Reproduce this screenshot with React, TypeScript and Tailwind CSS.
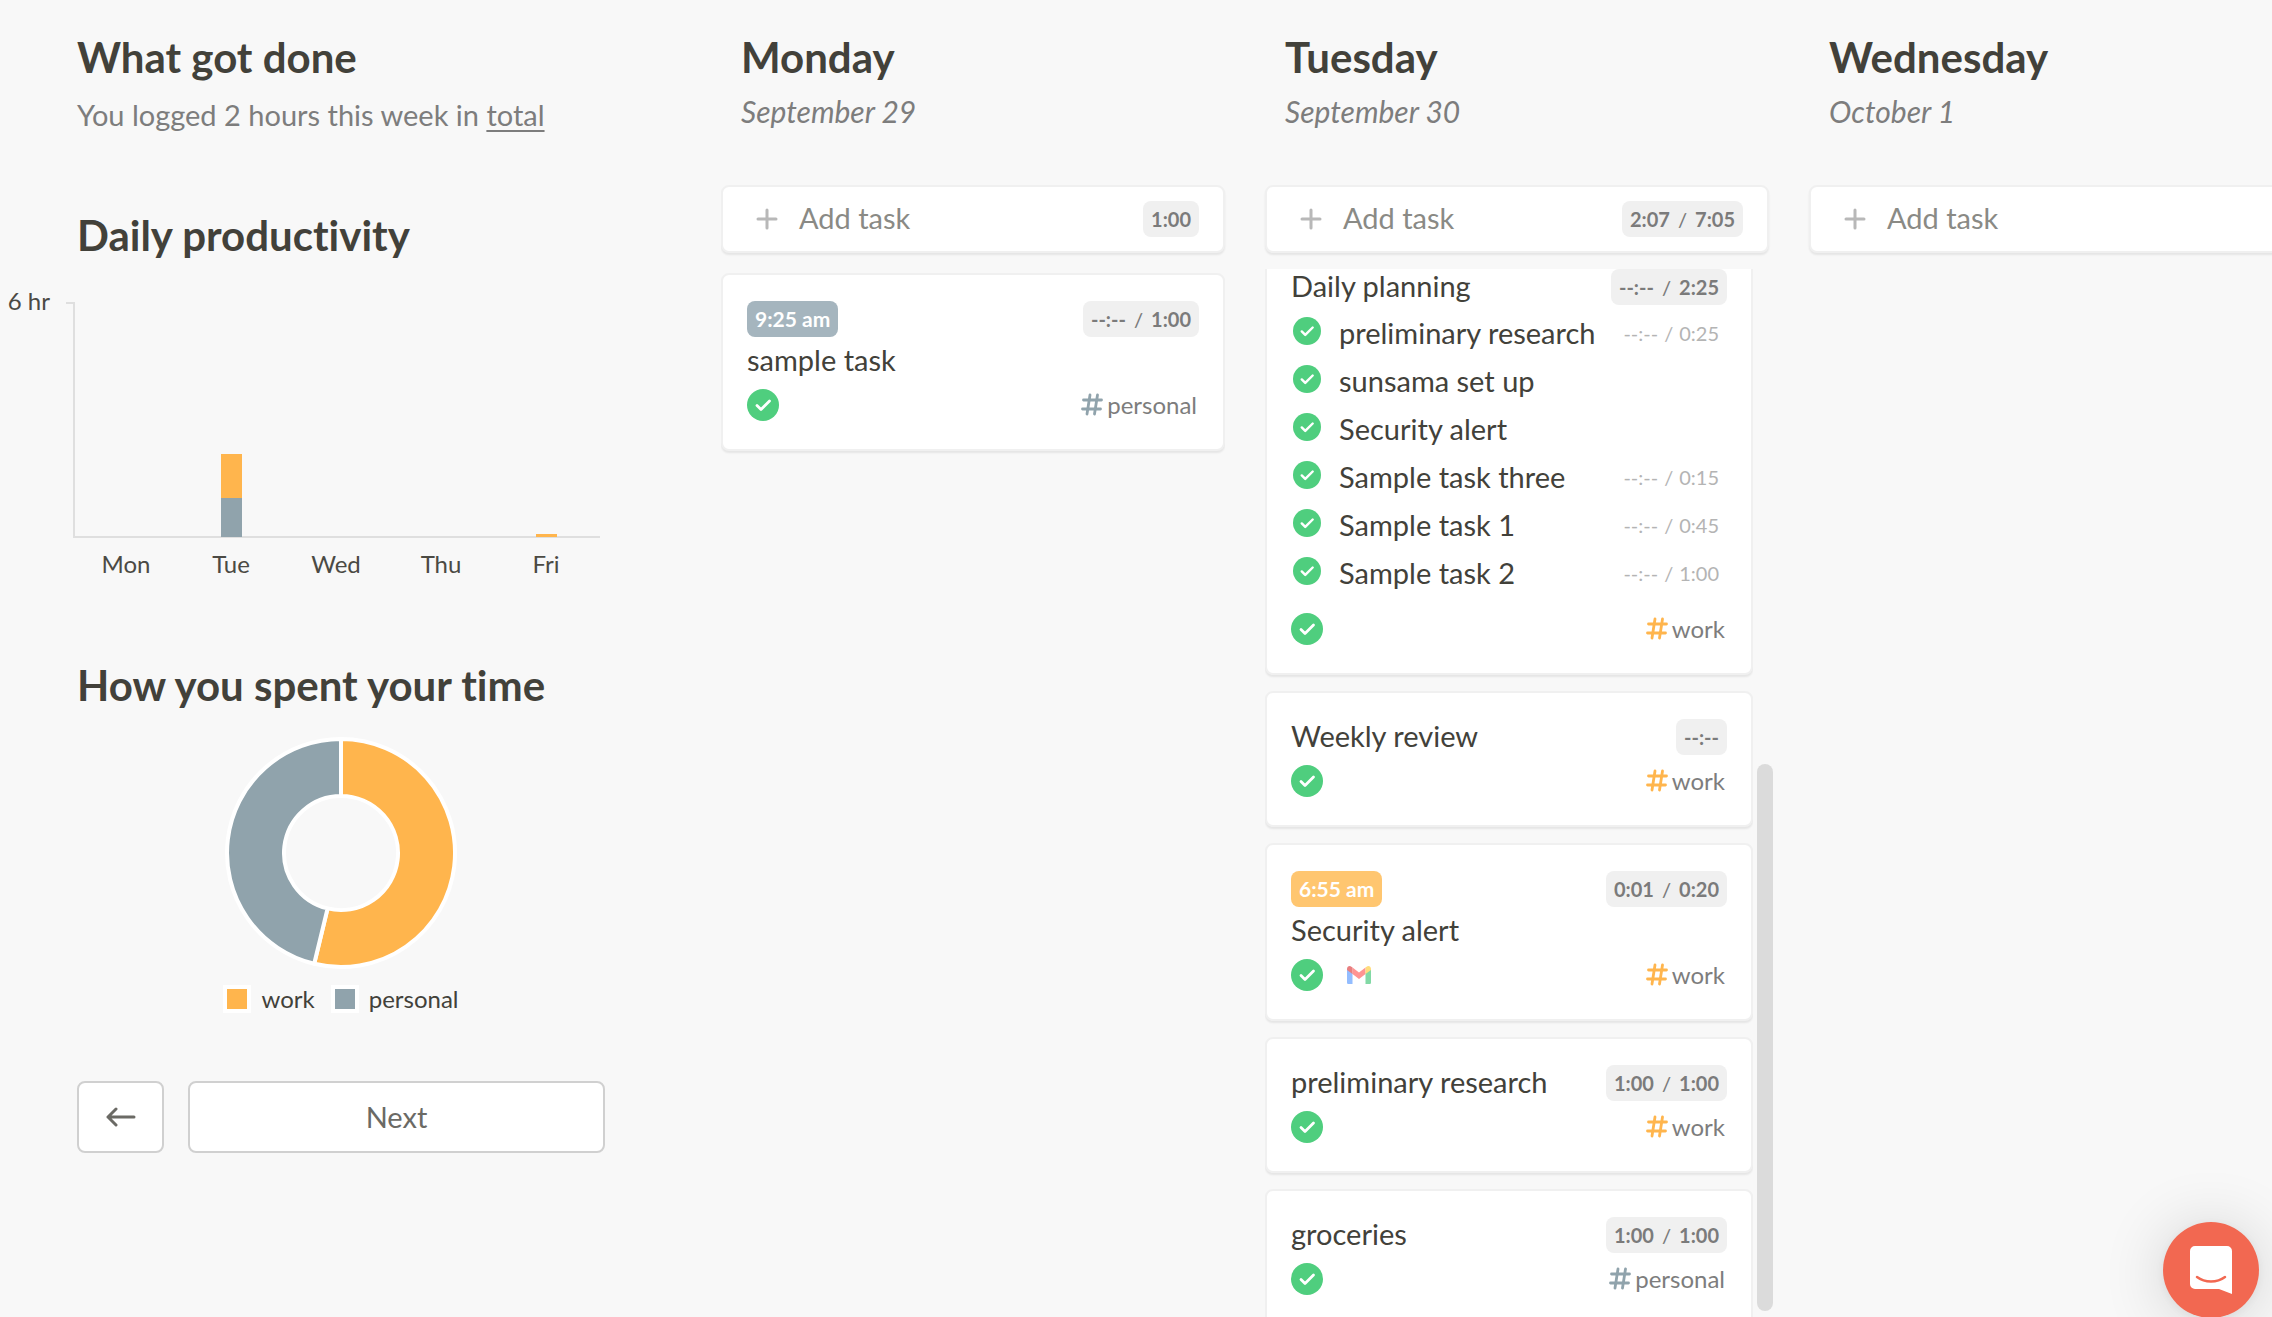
import { useLayoutEffect, useRef } from "react";
import clsx from "clsx";

type Channel = "work" | "personal";

type Subtask = { title: string; planned?: string };

type Task = {
  id: string;
  title: string;
  channel: Channel;
  actual: string;
  planned?: string;
  startsAt?: string;
  subtasks?: Subtask[];
  fromGmail?: boolean;
};

type Day = {
  name: string;
  date: string;
  actual?: string;
  planned?: string;
  scrollTop?: number;
  tasks: Task[];
};

const NO_TIME = "--:--";

const DAYS: Day[] = [
  {
    name: "Monday",
    date: "September 29",
    actual: "1:00",
    tasks: [
      {
        id: "m1",
        title: "sample task",
        channel: "personal",
        actual: NO_TIME,
        planned: "1:00",
        startsAt: "9:25 am",
      },
    ],
  },
  {
    name: "Tuesday",
    date: "September 30",
    actual: "2:07",
    planned: "7:05",
    scrollTop: 32,
    tasks: [
      {
        id: "t1",
        title: "Daily planning",
        channel: "work",
        actual: NO_TIME,
        planned: "2:25",
        subtasks: [
          { title: "preliminary research", planned: "0:25" },
          { title: "sunsama set up" },
          { title: "Security alert" },
          { title: "Sample task three", planned: "0:15" },
          { title: "Sample task 1", planned: "0:45" },
          { title: "Sample task 2", planned: "1:00" },
        ],
      },
      { id: "t2", title: "Weekly review", channel: "work", actual: NO_TIME },
      {
        id: "t3",
        title: "Security alert",
        channel: "work",
        actual: "0:01",
        planned: "0:20",
        startsAt: "6:55 am",
        fromGmail: true,
      },
      {
        id: "t4",
        title: "preliminary research",
        channel: "work",
        actual: "1:00",
        planned: "1:00",
      },
      {
        id: "t5",
        title: "groceries",
        channel: "personal",
        actual: "1:00",
        planned: "1:00",
      },
    ],
  },
  { name: "Wednesday", date: "October 1", tasks: [] },
];

export default function App() {
  return (
    <div className="flex h-screen overflow-hidden bg-[#f8f8f8] font-['Lato','Open_Sans',sans-serif] text-[#42413a] [font-variant-ligatures:none]">
      <Summary />
      <main className="flex min-w-0 flex-1 gap-10 overflow-hidden">
        {DAYS.map((day) => (
          <DayColumn key={day.name} day={day} />
        ))}
      </main>
      <button
        type="button"
        aria-label="Open chat"
        className="fixed right-[13px] -bottom-px flex size-24 items-center justify-center rounded-full bg-[#f26851] shadow-[0_2px_12px_rgba(0,0,0,0.06),0_4px_64px_rgba(0,0,0,0.16)]"
      >
        <svg width="42" height="48" viewBox="0 0 42 48" fill="none">
          <path
            d="M5 0h32a5 5 0 0 1 5 5v43l-13-5H5a5 5 0 0 1-5-5V5a5 5 0 0 1 5-5z"
            fill="#fff"
          />
          <path
            d="M7 31c8 6 20 6 28 0"
            stroke="#f26851"
            strokeWidth="2.5"
            strokeLinecap="round"
          />
        </svg>
      </button>
    </div>
  );
}

function Summary() {
  return (
    <aside className="w-[721px] shrink-0 pt-[33px]">
      <div className="pl-[77px]">
        <h1 className="text-[42px] leading-12 font-bold">What got done</h1>
        <p className="mt-4 text-[29px] leading-9 text-[#7d7d7d]">
          You logged 2 hours this week in{" "}
          <a href="#total" className="underline underline-offset-4">
            total
          </a>
        </p>
        <h2 className="mt-[78px] text-[42px] leading-12 font-bold">
          Daily productivity
        </h2>
      </div>

      <ProductivityChart />

      <div className="w-[605px] pl-[77px]">
        <h2 className="mt-[68px] text-[42px] leading-12 font-bold">
          How you spent your time
        </h2>
        <TimeDonut />
        <ul className="mt-3 flex justify-center gap-4 text-2xl leading-7">
          <li className="flex gap-2.5">
            <span className="size-7 border-4 border-white bg-[#ffb54d]" />
            work
          </li>
          <li className="flex gap-2.5">
            <span className="size-7 border-4 border-white bg-[#90a3ac]" />
            personal
          </li>
        </ul>
        <div className="mt-[68px] flex gap-6 text-[29px] text-[#6b6a65]">
          <button
            type="button"
            aria-label="Back"
            className="flex h-[72px] w-[87px] items-center justify-center rounded-lg border-2 border-[#d0d0d0] bg-white"
          >
            <svg
              width="30"
              height="20"
              viewBox="0 0 30 20"
              fill="none"
              stroke="currentColor"
              strokeWidth="3"
              strokeLinecap="round"
              strokeLinejoin="round"
            >
              <path d="M10 2 2 10l8 8M2 10h26" />
            </svg>
          </button>
          <button
            type="button"
            className="h-[72px] flex-1 rounded-lg border-2 border-[#d0d0d0] bg-white"
          >
            Next
          </button>
        </div>
      </div>
    </aside>
  );
}

function ProductivityChart() {
  const labels = ["Mon", "Tue", "Wed", "Thu", "Fri"];
  return (
    <svg
      width="605"
      height="320"
      viewBox="0 0 605 320"
      role="img"
      aria-label="Daily productivity"
      className="mt-3.5 block"
    >
      <path
        d="M66 30h8v234h526"
        fill="none"
        stroke="#dfdfdf"
        strokeWidth="2"
      />
      <rect x="221" y="181" width="21" height="44" fill="#ffb54d" />
      <rect x="221" y="225" width="21" height="39" fill="#90a3ac" />
      <rect x="536" y="261" width="21" height="3" fill="#ffb54d" />
      <g fill="#4b4a44" fontSize="24">
        <text x="50" y="37" textAnchor="end">
          6 hr
        </text>
        {labels.map((label, i) => (
          <text key={label} x={126 + i * 105} y="300" textAnchor="middle">
            {label}
          </text>
        ))}
      </g>
    </svg>
  );
}

function TimeDonut() {
  return (
    <svg
      width="240"
      height="240"
      viewBox="-120 -120 240 240"
      role="img"
      aria-label="work and personal"
      className="mx-auto mt-6 block"
    >
      <g stroke="#fff" strokeWidth="4" strokeLinejoin="bevel">
        <path
          d="M0-114A114 114 0 1 1-26.800 110.800L-13.400 55.400A57 57 0 1 0 0-57z"
          fill="#ffb54d"
        />
        <path
          d="M-26.800 110.800A114 114 0 0 1 0-114V-57A57 57 0 0 0-13.400 55.400z"
          fill="#90a3ac"
        />
      </g>
    </svg>
  );
}

function DayColumn({ day }: { day: Day }) {
  const listRef = useRef<HTMLDivElement>(null);

  useLayoutEffect(() => {
    if (listRef.current) listRef.current.scrollTop = day.scrollTop ?? 0;
  }, [day.scrollTop]);

  return (
    <section className="flex w-[504px] shrink-0 flex-col pt-[33px]">
      <header className="px-5">
        <h2 className="text-[42px] leading-12 font-bold">{day.name}</h2>
        <p className="mt-3 text-[30px] leading-9 text-[#7d7d7d] italic">
          {day.date}
        </p>
      </header>

      <button
        type="button"
        className="mt-14 flex h-[68px] shrink-0 items-center rounded-lg border-2 border-[#f0f0f0] bg-white pr-6 pl-[33px] text-[29px] text-[#8a8a85] shadow-[0_2px_2px_rgba(0,0,0,0.08)]"
      >
        <svg
          width="22"
          height="22"
          viewBox="0 0 22 22"
          stroke="#b8b8b8"
          strokeWidth="3"
          strokeLinecap="round"
        >
          <path d="M11 2v18M2 11h18" />
        </svg>
        <span className="ml-[21px] pb-0.5">Add task</span>
        {day.actual && (
          <span className="ml-auto">
            <TimeBadge actual={day.actual} planned={day.planned} />
          </span>
        )}
      </button>

      <div className="mt-4 flex min-h-0 flex-1 gap-1">
        <div
          ref={listRef}
          className="flex flex-1 flex-col gap-4 overflow-y-auto pt-1 pb-10 [scrollbar-width:none]"
        >
          {day.tasks.map((task) => (
            <TaskCard key={task.id} task={task} />
          ))}
        </div>
        {day.scrollTop && (
          <div className="-mr-1 flex w-4 flex-col justify-end pb-1.5">
            <div className="h-[52.5%] rounded-full bg-[#dbdbdb]" />
          </div>
        )}
      </div>
    </section>
  );
}

function TaskCard({ task }: { task: Task }) {
  return (
    <article className="shrink-0 rounded-lg border-2 border-[#f0f0f0] bg-white px-6 pt-[26px] pb-7 shadow-[0_2px_2px_rgba(0,0,0,0.08)]">
      <div className="flex h-9 items-start justify-between">
        {task.startsAt ? (
          <span
            className={clsx(
              "flex h-9 items-center rounded-lg px-2 text-[21px] font-bold text-white",
              task.channel === "work" ? "bg-[#ffc670]" : "bg-[#a5b5be]",
            )}
          >
            {task.startsAt}
          </span>
        ) : (
          <h3 className="text-[29px] leading-[34px]">{task.title}</h3>
        )}
        <TimeBadge actual={task.actual} planned={task.planned} />
      </div>
      {task.startsAt && (
        <h3 className="mt-1.5 h-9 text-[29px] leading-[34px]">{task.title}</h3>
      )}

      {task.subtasks && (
        <ul className="mt-3 mb-2">
          {task.subtasks.map((sub) => (
            <li key={sub.title} className="flex h-12 items-start">
              <CheckButton small label={sub.title} />
              <span className="ml-[18px] text-[29px] leading-8">
                {sub.title}
              </span>
              {sub.planned && (
                <span className="ml-auto flex gap-1.5 pr-2 text-xl leading-8 text-[#b4b4b4]">
                  <span>{NO_TIME}</span>
                  <span>/</span>
                  <span>{sub.planned}</span>
                </span>
              )}
            </li>
          ))}
        </ul>
      )}

      <div className={clsx("flex items-center", !task.subtasks && "mt-2.5")}>
        <CheckButton label={task.title} />
        {task.fromGmail && <GmailIcon />}
        <span className="ml-auto flex items-center gap-1 pr-0.5 text-2xl leading-8 text-[#7d7d7d]">
          <HashIcon channel={task.channel} />
          {task.channel}
        </span>
      </div>
    </article>
  );
}

function TimeBadge({ actual, planned }: { actual: string; planned?: string }) {
  return (
    <span className="flex h-9 items-center gap-2 rounded-lg bg-[#f0f0f0] px-2 text-xl font-bold text-[#7b7b7b]">
      <span>{actual}</span>
      {planned && (
        <>
          <span className="font-medium">/</span>
          <span>{planned}</span>
        </>
      )}
    </span>
  );
}

function CheckButton({ label, small }: { label: string; small?: boolean }) {
  return (
    <button
      type="button"
      aria-label={`Completed: ${label}`}
      className={clsx("shrink-0", small && "ml-0.5")}
    >
      <svg
        viewBox="0 0 32 32"
        fill="none"
        className={clsx("block", small ? "size-7" : "size-8")}
      >
        <circle cx="16" cy="16" r="16" fill="#4fce7e" />
        <path
          d="m10 16.5 4 4 8.5-8.5"
          stroke="#fff"
          strokeWidth="2.8"
          strokeLinecap="round"
          strokeLinejoin="round"
        />
      </svg>
    </button>
  );
}

function HashIcon({ channel }: { channel: Channel }) {
  return (
    <svg
      width="22"
      height="24"
      viewBox="0 0 22 24"
      fill="none"
      stroke={channel === "work" ? "#ffb54d" : "#90a3ac"}
      strokeWidth="2.8"
      strokeLinecap="round"
    >
      <path d="M9 2 6 21M16.500 2l-3 19M2.500 7h18M1.500 16h18" />
    </svg>
  );
}

function GmailIcon() {
  return (
    <svg width="24" height="18" viewBox="0 0 24 18" className="ml-6">
      <path d="M0 3v13.4C0 17.3.7 18 1.6 18h3.9V7z" fill="#93bdff" />
      <path d="M24 3v13.4c0 .9-.7 1.6-1.6 1.6h-3.9V7z" fill="#82d9a5" />
      <path d="M5.500 1.500 12 6.400l6.500-4.900V8L12 13 5.500 8z" fill="#ff9492" />
      <path d="M0 3C0 .4 2.6-.7 4.4.7l1.100.8V8L0 4.100z" fill="#e87f80" />
      <path d="M24 3c0-2.600-2.600-3.700-4.400-2.300l-1.100.8V8L24 4.100z" fill="#ffdc7c" />
    </svg>
  );
}
